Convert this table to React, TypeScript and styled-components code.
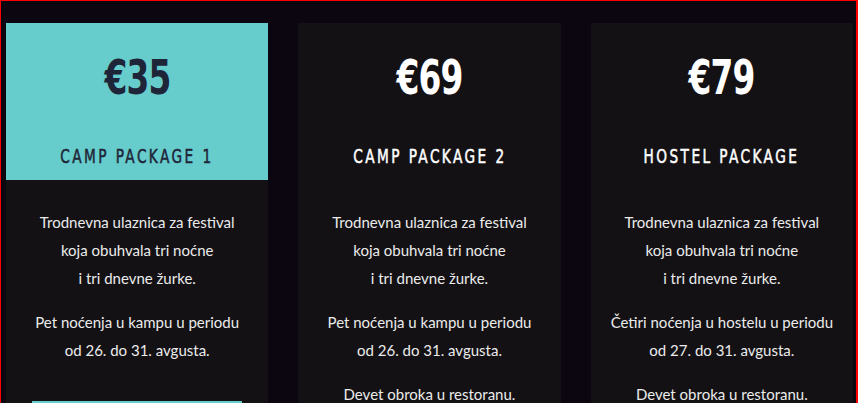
import React from 'react'
import styled, { createGlobalStyle } from 'styled-components'

/**********************************************************************/

const GlobalStyle = createGlobalStyle`
  html, body {
    margin: 0;
    padding: 0;
    background-color: #0b0610;
  }
  * {
    box-sizing: border-box;
  }
`

const Page = styled.div`
  border: 1px solid #ff0000;
  border-right-width: 2px;
  background-color: #0b0610;
  padding: 22px 3px 40px 5px;
`

const Grid = styled.div`
  display: grid;
  grid-template-columns: repeat(3, 1fr);
  column-gap: 30px;
`

const Card = styled.div`
  display: flex;
  flex-direction: column;
  background-color: #131114;
`

const Head = styled.div<{ $active?: boolean }>`
  display: flex;
  flex-direction: column;
  align-items: center;
  height: 157px;
  padding-top: 25px;
  background-color: ${(p) => (p.$active ? '#66cccc' : 'transparent')};
  color: ${(p) => (p.$active ? '#1f2538' : '#ffffff')};
`

// condensed display face: squeeze DejaVu Condensed down to an Oswald-ish width
const Price = styled.div`
  font-family: 'DejaVu Sans Condensed', sans-serif;
  font-weight: 700;
  font-size: 48px;
  line-height: 58px;
  letter-spacing: -1px;
  transform: scaleX(0.76);
`

const Title = styled.h3`
  margin: 38px 0 0;
  font-family: 'DejaVu Sans Condensed', sans-serif;
  font-weight: 400;
  font-size: 20px;
  line-height: 24px;
  letter-spacing: 3.2px;
  text-transform: uppercase;
  white-space: nowrap;
  transform: scaleX(0.76);
  -webkit-text-stroke: 0.5px currentColor;
`

const Body = styled.div`
  display: flex;
  flex-direction: column;
  align-items: center;
  padding: 28px 10px 40px;
  font-family: Lato, 'Open Sans', sans-serif;
  font-size: 15px;
  line-height: 28px;
  color: #ebebeb;
  text-align: center;
`

const Para = styled.p`
  margin: 0 0 16px;
`

const Button = styled.button`
  margin-top: 21px;
  width: 210px;
  height: 46px;
  border: none;
  background-color: #66cccc;
`

/**********************************************************************/

const packages = [
  {
    price: '€35',
    title: 'Camp package 1',
    stay: ['Pet noćenja u kampu u periodu', 'od 26. do 31. avgusta.'],
    meals: false,
  },
  {
    price: '€69',
    title: 'Camp package 2',
    stay: ['Pet noćenja u kampu u periodu', 'od 26. do 31. avgusta.'],
    meals: true,
  },
  {
    price: '€79',
    title: 'Hostel package',
    stay: ['Četiri noćenja u hostelu u periodu', 'od 27. do 31. avgusta.'],
    meals: true,
  },
]

const App: React.FC = () => {
  return (
    <>
      <GlobalStyle />
      <Page>
        <Grid>
          {packages.map((pkg, i) => (
            <Card key={pkg.title}>
              <Head $active={i === 0}>
                <Price>{pkg.price}</Price>
                <Title>{pkg.title}</Title>
              </Head>
              <Body>
                <Para>
                  Trodnevna ulaznica za festival
                  <br />
                  koja obuhvala tri noćne
                  <br />
                  i tri dnevne žurke.
                </Para>
                <Para>
                  {pkg.stay[0]}
                  <br />
                  {pkg.stay[1]}
                </Para>
                {pkg.meals && <Para>Devet obroka u restoranu.</Para>}
                <Button aria-label="Kupi" />
              </Body>
            </Card>
          ))}
        </Grid>
      </Page>
    </>
  )
}

export default App
